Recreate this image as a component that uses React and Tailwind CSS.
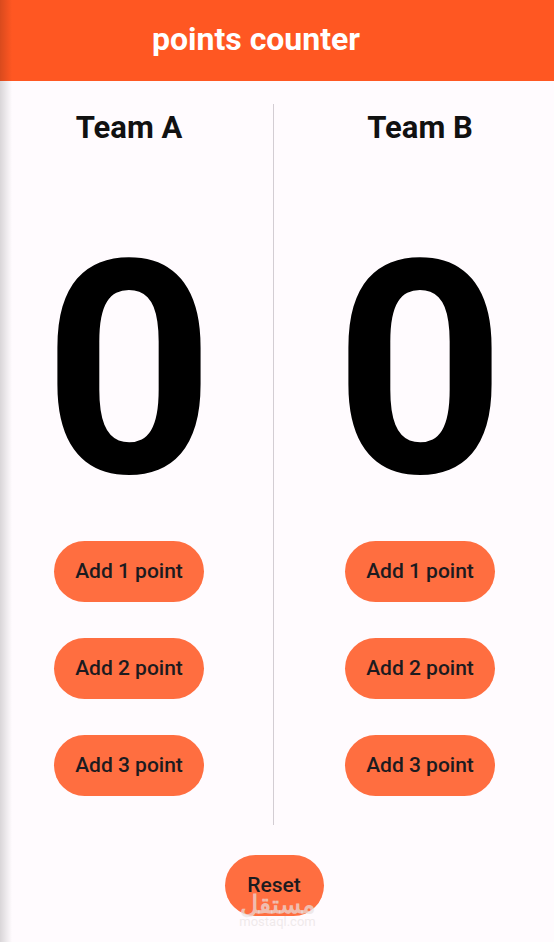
const rows = ['Add 1 point', 'Add 2 point', 'Add 3 point'];

function TeamColumn({ name, shift }) {
  return (
    <div className={`flex w-[258px] flex-col items-center ${shift}`}>
      <h2 className="mt-[4px] text-[31px] font-bold leading-[40px] text-[#111]">{name}</h2>
      <div className="mt-[98px] h-[250px] text-[298px] font-bold leading-[250px] text-black">0</div>
      <div className="mt-[45px] flex flex-col gap-[36px]">
        {rows.map((label) => (
          <button
            key={label}
            className="h-[61px] w-[150px] rounded-full bg-[#ff6e40] text-[21px] font-medium text-[#1c1b1f]"
          >
            {label}
          </button>
        ))}
      </div>
    </div>
  );
}

export default function App() {
  return (
    <div className="relative h-[942px] w-[554px] overflow-hidden bg-[#fffbfe] font-['Roboto',sans-serif]">
      <header className="flex h-[81px] items-center justify-center bg-[#ff5722] pb-[4px] pr-[42px]">
        <h1 className="text-[32px] font-bold text-white">points counter</h1>
      </header>

      <div className="flex pt-[23px]">
        <TeamColumn name="Team A" shift="" />
        <div className="mx-[15px] h-[721px] w-px bg-[#d3cdd3]" />
        <TeamColumn name="Team B" shift="ml-[2px]" />
      </div>

      <div className="mt-[30px] flex justify-center">
        <button className="ml-[-6px] h-[61px] w-[99px] rounded-full bg-[#ff6e40] text-[21px] font-medium text-[#1c1b1f]">
          Reset
        </button>
      </div>

      {/* watermark */}
      <div className="pointer-events-none absolute left-[240px] top-[890px] flex w-[75px] flex-col items-center leading-none text-[#e9e2e2]/70">
        <span className="font-['Noto_Sans',sans-serif] text-[25px] font-bold leading-[26px]">مستقل</span>
        <span className="text-[13px] leading-[12px]">mostaql.com</span>
      </div>

      <div className="pointer-events-none absolute left-0 top-0 h-full w-[12px] bg-gradient-to-r from-black/15 to-transparent" />
    </div>
  );
}
